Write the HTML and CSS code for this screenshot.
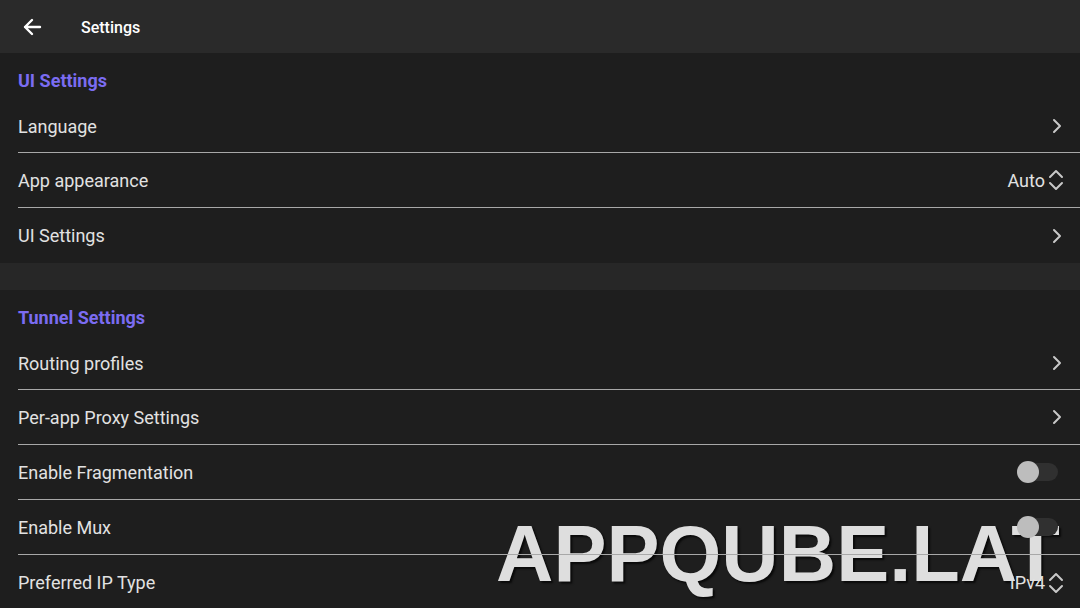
FILE: index.html
```html
<!DOCTYPE html>
<html>
<head>
<meta charset="utf-8">
<title>Settings</title>
<link rel="stylesheet" href="styles.css">
</head>
<body>
<div class="screen">
  <header class="topbar">
    <svg class="back" width="20" height="18" viewBox="0 0 20 18"><path d="M18 9H3M10 2L3 9l7 7" fill="none" stroke="#fff" stroke-width="2.4" stroke-linecap="round" stroke-linejoin="round"/></svg>
    <span class="title">Settings</span>
  </header>

  <section class="group">
    <h2 class="group-title">UI Settings</h2>
    <div class="row">
      <span class="label">Language</span>
      <svg class="chev" width="10" height="16" viewBox="0 0 10 16"><path d="M2 2l6 6-6 6" fill="none" stroke="#c8c8c8" stroke-width="2" stroke-linecap="round" stroke-linejoin="round"/></svg>
    </div>
    <div class="row">
      <span class="label">App appearance</span>
      <span class="value">Auto<svg class="updown" width="16" height="24" viewBox="0 0 16 24"><path d="M2 9l6-6 6 6M2 15l6 6 6-6" fill="none" stroke="#c8c8c8" stroke-width="2" stroke-linecap="round" stroke-linejoin="round"/></svg></span>
    </div>
    <div class="row last">
      <span class="label">UI Settings</span>
      <svg class="chev" width="10" height="16" viewBox="0 0 10 16"><path d="M2 2l6 6-6 6" fill="none" stroke="#c8c8c8" stroke-width="2" stroke-linecap="round" stroke-linejoin="round"/></svg>
    </div>
  </section>

  <div class="spacer"></div>

  <section class="group">
    <h2 class="group-title">Tunnel Settings</h2>
    <div class="row">
      <span class="label">Routing profiles</span>
      <svg class="chev" width="10" height="16" viewBox="0 0 10 16"><path d="M2 2l6 6-6 6" fill="none" stroke="#c8c8c8" stroke-width="2" stroke-linecap="round" stroke-linejoin="round"/></svg>
    </div>
    <div class="row">
      <span class="label">Per-app Proxy Settings</span>
      <svg class="chev" width="10" height="16" viewBox="0 0 10 16"><path d="M2 2l6 6-6 6" fill="none" stroke="#c8c8c8" stroke-width="2" stroke-linecap="round" stroke-linejoin="round"/></svg>
    </div>
    <div class="row">
      <span class="label">Enable Fragmentation</span>
      <span class="switch"><span class="knob"></span></span>
    </div>
    <div class="row">
      <span class="label">Enable Mux</span>
      <span class="switch"><span class="knob"></span></span>
    </div>
    <div class="row last">
      <span class="label">Preferred IP Type</span>
      <span class="value">IPv4<svg class="updown" width="16" height="24" viewBox="0 0 16 24"><path d="M2 9l6-6 6 6M2 15l6 6 6-6" fill="none" stroke="#c8c8c8" stroke-width="2" stroke-linecap="round" stroke-linejoin="round"/></svg></span>
    </div>
  </section>

  <div class="watermark">APPQUBE.LAT</div>
</div>
</body>
</html>
```

FILE: styles.css
```css
* { box-sizing: border-box; }

html, body {
  margin: 0;
  padding: 0;
  background: #1e1e1e;
  font-family: Roboto, "Noto Sans", sans-serif;
}

.screen {
  position: relative;
  width: 1080px;
  height: 608px;
  overflow: hidden;
  background: #1e1e1e;
}

.topbar {
  height: 53px;
  background: #2a2a2a;
  display: flex;
  align-items: center;
  padding-left: 22px;
}

.back {
  display: block;
  margin-top: 1px;
}

.title {
  margin-left: 39px;
  color: #ffffff;
  font-size: 16px;
  font-weight: 500;
  margin-top: 1px;
}

/* list content sits above the watermark */
.group {
  position: relative;
  z-index: 1;
  padding-left: 18px;
}

.group-title {
  margin: 0;
  height: 53px;
  display: flex;
  align-items: center;
  padding-top: 2px;
  color: #7b6cf2;
  font-size: 18px;
  font-weight: 700;
}

.row {
  height: 55px;
  display: flex;
  align-items: center;
  justify-content: space-between;
  padding-right: 18px;
  border-bottom: 1.5px solid #a8a8a8;
}

.row.last {
  border-bottom: none;
}

.group .row:first-of-type {
  height: 47px;
  padding-bottom: 6px;
}

.label {
  color: #e2e2e2;
  font-size: 18px;
}

.chev {
  display: block;
}

.value {
  display: flex;
  align-items: center;
  gap: 3px;
  color: #e2e2e2;
  font-size: 18px;
  margin-right: -2px;
}

.updown {
  display: block;
}

.spacer {
  height: 27px;
  background: #272727;
}

.switch {
  position: relative;
  width: 40px;
  height: 18px;
  border-radius: 9px;
  background: #303030;
  margin-right: 4px;
}

.knob {
  position: absolute;
  left: -1px;
  top: -2px;
  width: 22px;
  height: 22px;
  border-radius: 50%;
  background: #bdbdbd;
}

.watermark {
  position: absolute;
  z-index: 0;
  left: 496px;
  top: 509px;
  font-family: "Liberation Sans", Arial, sans-serif;
  font-weight: 700;
  font-size: 79.5px;
  line-height: 90px;
  color: #dedede;
  text-shadow: 2px 2px 2px rgba(0, 0, 0, 0.7);
}
```
